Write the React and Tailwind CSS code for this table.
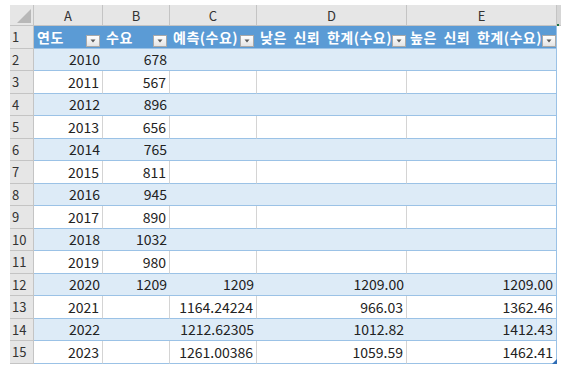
import React from "react";

const rows = [
  ["2010", "678", "", "", ""],
  ["2011", "567", "", "", ""],
  ["2012", "896", "", "", ""],
  ["2013", "656", "", "", ""],
  ["2014", "765", "", "", ""],
  ["2015", "811", "", "", ""],
  ["2016", "945", "", "", ""],
  ["2017", "890", "", "", ""],
  ["2018", "1032", "", "", ""],
  ["2019", "980", "", "", ""],
  ["2020", "1209", "1209", "1209.00", "1209.00"],
  ["2021", "", "1164.24224", "966.03", "1362.46"],
  ["2022", "", "1212.62305", "1012.82", "1412.43"],
  ["2023", "", "1261.00386", "1059.59", "1462.41"],
];

const widths = ["w-[69px]", "w-[67px]", "w-[87px]", "w-[150px]", "w-[150px]"];
const headers = ["연도", "수요", "예측(수요)", "낮은 신뢰 한계(수요)", "높은 신뢰 한계(수요)"];
const letters = ["A", "B", "C", "D", "E"];

function Drop() {
  return (
    <div className="ml-auto mb-[1px] self-end flex h-[12px] w-[14px] shrink-0 items-center justify-center border border-[#a9a9a9] bg-gradient-to-b from-white to-[#e4e4e4]">
      <svg width="6" height="4" viewBox="0 0 6 4">
        <path d="M0.5 0.5 L5.5 0.5 L3 3.5 Z" fill="#595959" />
      </svg>
    </div>
  );
}

export default function App() {
  return (
    <div
      className="w-[582px] h-[372px] bg-white pl-[10px] pt-[5px] overflow-hidden"
      style={{ fontFamily: '"Noto Sans CJK KR", "Noto Sans", sans-serif' }}
    >
      {/* column header row */}
      <div className="flex h-[21px]">
        <div className="relative w-[24px] h-[21px] bg-[#e6e6e6] border-r border-b border-[#c4c4c4]">
          <svg className="absolute right-[2px] bottom-[2px]" width="14" height="14" viewBox="0 0 14 14">
            <path d="M14 0 L14 14 L0 14 Z" fill="#b8b8b8" />
          </svg>
        </div>
        {letters.map((l, i) => (
          <div
            key={l}
            className={`${widths[i]} h-[21px] flex items-center justify-center bg-[#e6e6e6] border-r border-b border-[#c4c4c4] text-[13px] text-[#333] leading-none`}
          >
            {l}
          </div>
        ))}
        <div className="relative w-[4px] h-[21px] bg-[#d6d6d6] border-b border-[#c4c4c4]">
          <div className="absolute left-0 bottom-[-1px] w-[2px] h-[2px] bg-[#217346]" />
        </div>
      </div>

      {/* table header row 1 */}
      <div className="flex h-[22.5px]">
        <div className="w-[24px] h-full flex items-center pl-[2px] bg-[#e6e6e6] border-r border-b border-[#c4c4c4] text-[13px] text-[#333] leading-none">
          1
        </div>
        {headers.map((h, i) => (
          <div
            key={h}
            className={`${widths[i]} h-full flex items-center pl-[3px] pr-[3px] bg-[#5b9bd5] border-b border-[#9bc2e6] ${i === 4 ? "border-r border-r-[#9bc2e6]" : ""} text-[14px] font-bold text-white leading-none whitespace-nowrap`}
          >
            <span className="tracking-[0.5px] [word-spacing:3px]">{h}</span>
            <Drop />
          </div>
        ))}
      </div>

      {rows.map((r, ri) => {
        const blue = ri % 2 === 0;
        const last = ri === rows.length - 1;
        return (
          <div key={ri} className="flex h-[22.5px]">
            <div className="w-[24px] h-full flex items-center pl-[2px] bg-[#e6e6e6] border-r border-b border-[#c4c4c4] text-[13px] text-[#333] leading-none">
              {ri + 2}
            </div>
            {r.map((v, ci) => (
              <div
                key={ci}
                className={`relative ${widths[ci]} h-full flex items-center justify-end pr-[3px] border-b border-[#9bc2e6] ${
                  blue ? "bg-[#ddebf7]" : "bg-white"
                } ${ci === 4 ? "border-r border-r-[#9bc2e6]" : blue ? "" : "border-r border-r-[#d4d4d4]"} text-[14px] text-[#222] leading-none`}
              >
                {v}
                {last && ci === 4 && (
                  <svg className="absolute right-[-1px] bottom-[-1px]" width="5" height="5" viewBox="0 0 5 5">
                    <path d="M5 0 L5 5 L0 5 Z" fill="#2f6db5" />
                  </svg>
                )}
              </div>
            ))}
          </div>
        );
      })}
    </div>
  );
}
